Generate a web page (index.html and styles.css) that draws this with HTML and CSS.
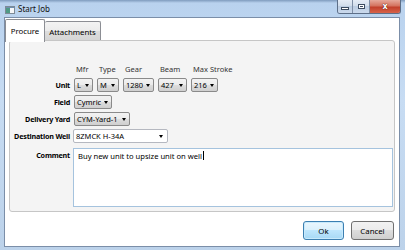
FILE: index.html
```html
<!DOCTYPE html>
<html lang="en">
<head>
    <meta charset="UTF-8">
    <meta name="viewport" content="width=device-width, initial-scale=1.0">
    <title>Start Job</title>
    <link rel="stylesheet" href="styles.css">
</head>
<body>
    <div class="window">
        <div class="titlebar">
            <svg class="app-icon" width="10" height="8" viewBox="0 0 10 8">
                <rect x="0.5" y="0.5" width="9" height="7" fill="#f4f6f8" stroke="#7d8a96"/>
                <rect x="1" y="1" width="4" height="6" fill="#4f9a86"/>
                <rect x="1" y="1" width="8" height="1" fill="#6f8fb0"/>
            </svg>
            <span class="title">Start Job</span>
            <div class="caption">
                <span class="cap-btn min"><i></i></span>
                <span class="cap-btn max"><i></i></span>
                <span class="cap-btn close">x</span>
            </div>
        </div>

        <div class="client">
            <div class="tabs">
                <div class="tab active">Procure</div>
                <div class="tab">Attachments</div>
            </div>

            <div class="panel">
                <div class="form">
                    <div class="label"></div>
                    <div class="unit-cols heads">
                        <span>Mfr</span>
                        <span>Type</span>
                        <span>Gear</span>
                        <span>Beam</span>
                        <span>Max Stroke</span>
                    </div>

                    <div class="label">Unit</div>
                    <div class="unit-cols">
                        <div class="combo">L</div>
                        <div class="combo">M</div>
                        <div class="combo">1280</div>
                        <div class="combo">427</div>
                        <div class="combo">216</div>
                    </div>

                    <div class="label">Field</div>
                    <div><div class="combo w-field">Cymric</div></div>

                    <div class="label">Delivery Yard</div>
                    <div><div class="combo w-yard">CYM-Yard-1</div></div>

                    <div class="label">Destination Well</div>
                    <div><div class="combo editable w-well">8ZMCK H-34A</div></div>

                    <div class="label top">Comment</div>
                    <div class="textbox">Buy new unit to upsize unit on well<span class="caret"></span></div>
                </div>
            </div>

            <div class="actions">
                <button class="btn default">Ok</button>
                <button class="btn">Cancel</button>
            </div>
        </div>
    </div>
</body>
</html>
```

FILE: styles.css
```css
* {
    box-sizing: border-box;
}
body {
    margin: 0;
    width: 405px;
    height: 250px;
    overflow: hidden;
    font-family: "Noto Sans", "Open Sans", sans-serif;
    font-size: 7.5px;
    color: #000;
    background: linear-gradient(to bottom, #7f9bbd 0, #b9d2ee 3px, #c7dcf3 40%, #bcd2ea 100%);
}
.window {
    display: flex;
    flex-direction: column;
    height: 250px;
    padding: 0 5px 3px 4px;
}

/* title bar */
.titlebar {
    height: 17px;
    flex-shrink: 0;
    display: flex;
    align-items: flex-start;
    margin-right: -1px;
}
.app-icon {
    margin: 6px 0 0 1px;
}
.title {
    margin: 4px 0 0 3px;
    font-size: 8px;
    line-height: 10px;
    color: #111;
}
.caption {
    margin-left: auto;
    display: flex;
    height: 14px;
    border: 1px solid #5d6f88;
    border-top: none;
    border-radius: 0 0 3px 3px;
    overflow: hidden;
}
.cap-btn {
    display: flex;
    align-items: center;
    justify-content: center;
    background: linear-gradient(#e4ecf6, #cfdbea 50%, #bccde2 50%, #cad9ec);
    border-right: 1px solid #7d8ea6;
}
.cap-btn.min {
    width: 15px;
}
.cap-btn.max {
    width: 17px;
}
.cap-btn.min i {
    width: 6px;
    height: 1px;
    margin-top: 4px;
    background: #fff;
    border: 1px solid #3b4b60;
    box-sizing: content-box;
}
.cap-btn.max i {
    width: 7px;
    height: 5px;
    border: 1px solid #3b4b60;
    background: #fff;
    box-shadow: inset 0 0 0 1px #fff, inset 0 0 0 2px #3b4b60;
}
.cap-btn.close {
    width: 30px;
    border-right: none;
    background: linear-gradient(#e6a99b, #d4735f 45%, #c2402b 55%, #d7634a);
    color: #fff;
    font-family: "DejaVu Sans", sans-serif;
    font-weight: bold;
    font-size: 8px;
    line-height: 1;
    text-shadow: 0 0 1px #5a1a10, 0 0 1px #5a1a10;
}

/* client area */
.client {
    flex: 1;
    display: flex;
    flex-direction: column;
    background: #fff;
    border: 1px solid #7b8ea8;
}
.tabs {
    display: flex;
    align-items: flex-start;
    height: 23px;
    padding-top: 1px;
    font-size: 7.8px;
}
.tab {
    height: 20px;
    margin-top: 2px;
    border: 1px solid #8c8e94;
    border-left: none;
    border-bottom: none;
    border-radius: 2px 2px 0 0;
    background: linear-gradient(#f3f3f3, #ebebeb 50%, #dddddd 50%, #d4d4d4);
    display: flex;
    align-items: center;
    justify-content: center;
    width: 56px;
}
.tab.active {
    position: relative;
    z-index: 1;
    width: 40px;
    height: 23px;
    margin-top: 0;
    border-left: 1px solid #8c8e94;
    background: #fff;
}
.panel {
    height: 172px;
    margin: -1px 4px 0 4px;
    padding: 22px 1px 2px 0;
    background: #f4f4f4;
    border: 1px solid #c6c6c6;
    border-radius: 3px;
}
.form {
    display: grid;
    grid-template-columns: 60px 1fr;
    grid-template-rows: 12px 14px 14px 14px 14px 61px;
    column-gap: 4px;
    row-gap: 3px;
}
.label {
    font-size: 7.2px;
    font-weight: bold;
    letter-spacing: -0.2px;
    text-align: right;
    display: flex;
    align-items: center;
    justify-content: flex-end;
    white-space: nowrap;
}
.label.top {
    align-items: flex-start;
    padding-top: 4px;
}
.unit-cols {
    display: grid;
    grid-template-columns: 19px 22px 31px 29px 27px;
    column-gap: 4px;
}
.heads span {
    padding-left: 2px;
    color: #333;
    white-space: nowrap;
    align-self: center;
}

/* combo boxes */
.combo {
    display: flex;
    align-items: center;
    justify-content: space-between;
    height: 14px;
    padding: 0 3px 0 2px;
    border: 1px solid #8a8a8a;
    border-radius: 2px;
    background: linear-gradient(#f2f2f2, #ebebeb 50%, #dddddd 50%, #cfcfcf);
    white-space: nowrap;
}
.combo::after {
    content: "";
    border-left: 2.5px solid transparent;
    border-right: 2.5px solid transparent;
    border-top: 3px solid #000;
    margin-left: 3px;
}
.combo.editable {
    background: #fff;
    border-color: #b5b8c0;
    padding-right: 4px;
}
.w-field {
    width: 38px;
}
.w-yard {
    width: 56px;
}
.w-well {
    width: 95px;
    margin-left: -1px;
}
.textbox {
    margin: 2px 0 0 -1px;
    padding: 2px 4px;
    background: #fff;
    border: 1px solid #a5c3de;
    line-height: 10px;
    font-size: 7.6px;
}
.caret {
    display: inline-block;
    width: 1px;
    height: 9px;
    margin-left: 1px;
    vertical-align: -1px;
    background: #000;
}

/* buttons */
.actions {
    display: flex;
    justify-content: flex-end;
    gap: 7px;
    margin-top: 9px;
    padding-right: 5px;
}
.btn {
    height: 19px;
    width: 43px;
    padding: 0;
    font-family: inherit;
    font-size: 7.8px;
    color: #000;
    border: 1px solid #707070;
    border-radius: 3px;
    background: linear-gradient(#f2f2f2, #ebebeb 50%, #dddddd 50%, #cfcfcf);
}
.btn.default {
    width: 41px;
    border-color: #3c7fb1;
    background: linear-gradient(#eaf6fd, #d9f0fc 50%, #bee6fd 50%, #a7d9f5);
    box-shadow: inset 0 0 0 1px #c8eafc;
}
```
